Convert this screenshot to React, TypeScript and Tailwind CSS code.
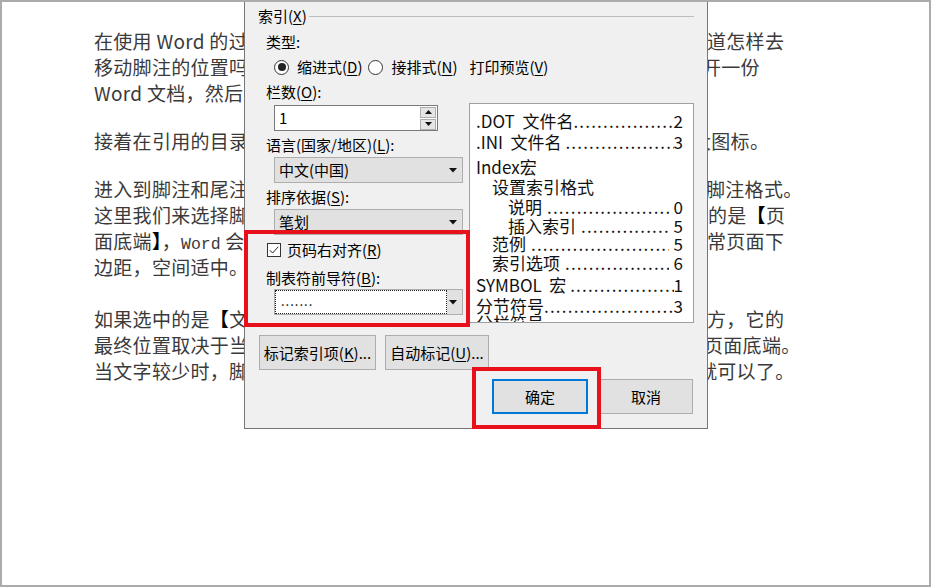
import React from "react";

const DOTS = ".".repeat(80);

function U({ c }: { c: string }) {
  return <span className="underline decoration-1 underline-offset-[2px]">{c}</span>;
}

function Caret() {
  return (
    <svg width="8" height="5" viewBox="0 0 8 5" className="shrink-0">
      <path d="M0 0H8L4 4.5Z" fill="#111" />
    </svg>
  );
}

function Select({ text }: { text: string }) {
  return (
    <div className="ml-[8px] mt-[2px] flex h-[26px] w-[189px] items-center justify-between border border-[#adadad] bg-[#e1e1e1] pl-[4px] pr-[5px]">
      <span>{text}</span>
      <Caret />
    </div>
  );
}

function Radio({ checked }: { checked?: boolean }) {
  return (
    <span className="flex h-[15px] w-[15px] shrink-0 items-center justify-center rounded-full border border-[#333] bg-white">
      {checked && <span className="h-[8px] w-[8px] rounded-full bg-[#222]" />}
    </span>
  );
}

function Row({
  name,
  num,
  cls,
  gap,
}: {
  name: React.ReactNode;
  num: string;
  cls: string;
  gap?: boolean;
}) {
  return (
    <div className={"flex h-[20px] whitespace-nowrap " + cls}>
      <span className="shrink-0">{name}</span>
      <span className={"min-w-0 flex-1 overflow-hidden tracking-[1.2px] " + (gap ? "mx-[5px]" : "")}>{DOTS}</span>
      <span className="shrink-0">{num}</span>
    </div>
  );
}

function Dialog() {
  return (
    <div className="absolute left-[242px] top-0 h-[427px] w-[464px] border-x border-b border-[#767676] bg-[#f0f0f0] text-[15px] leading-[20px] text-black">
      <div className="flex items-center pl-[13px] pr-[13px] pt-[4px]">
        <span>
          索引(<U c="X" />)
        </span>
        <span className="ml-[2px] h-px flex-1 bg-[#bdbdbd]" />
      </div>
      <div className="mt-[6px] pl-[21px]">类型:</div>
      <div className="mt-[5px] flex h-[20px] items-center pl-[29px]">
        <Radio checked />
        <span className="ml-[8px]">
          缩进式(<U c="D" />)
        </span>
        <span className="ml-[6px]">
          <Radio />
        </span>
        <span className="ml-[8px]">
          接排式(<U c="N" />)
        </span>
        <span className="ml-[12px]">
          打印预览(<U c="V" />)
        </span>
      </div>

      <div className="mt-[5px] flex items-start">
        <div className="w-[218px] shrink-0 pl-[21px]">
          <div className="h-[20px]">
            栏数(<U c="O" />):
          </div>
          <div className="ml-[8px] mt-[3px] flex h-[26px] w-[164px] items-center justify-between border border-[#7a7a7a] bg-white pl-[4px] pr-[1px]">
            <span>1</span>
            <div className="flex flex-col gap-[1px]">
              <div className="flex h-[11px] w-[16px] items-center justify-center border border-[#adadad] bg-[#e5e5e5]">
                <svg width="7" height="4" viewBox="0 0 7 4">
                  <path d="M0 4H7L3.5 0Z" fill="#111" />
                </svg>
              </div>
              <div className="flex h-[11px] w-[16px] items-center justify-center border border-[#adadad] bg-[#e5e5e5]">
                <svg width="7" height="4" viewBox="0 0 7 4">
                  <path d="M0 0H7L3.5 4Z" fill="#111" />
                </svg>
              </div>
            </div>
          </div>
          <div className="mt-[4px] h-[20px]">
            语言(国家/地区)(<U c="L" />):
          </div>
          <Select text="中文(中国)" />
          <div className="mt-[4px] h-[20px]">
            排序依据(<U c="S" />):
          </div>
          <Select text="笔划" />
          <div className="mt-[5px] flex h-[20px] items-center">
            <span className="ml-[1px] flex h-[14px] w-[14px] items-center justify-center border border-[#333] bg-white">
              <svg width="12" height="12" viewBox="0 0 12 12">
                <path d="M1.8 6.2L4.6 9L10.2 2.8" stroke="#222" strokeWidth="1" fill="none" />
              </svg>
            </span>
            <span className="ml-[6px]">
              页码右对齐(<U c="R" />)
            </span>
          </div>
          <div className="mt-[8px] h-[20px]">
            制表符前导符(<U c="B" />):
          </div>
          <div className="ml-[8px] mt-[1px] flex h-[26px] w-[189px] items-center border border-[#adadad] bg-[#e1e1e1] pr-[5px]">
            <div className="flex h-[24px] w-[172px] items-center border border-dotted border-[#222] bg-white pb-[3px] pl-[5px] text-[13px] leading-[14px] tracking-[1px]">
              .......
            </div>
            <div className="flex flex-1 justify-end">
              <Caret />
            </div>
          </div>
        </div>

        <div className="ml-[6px] mt-[21px] h-[220px] w-[225px] shrink-0 overflow-hidden border border-[#a0a0a0] bg-white pl-[6px] pr-[10px] pt-[7px] text-[17px] leading-[20px] text-[#111]">
          <Row cls="" name={<span className="whitespace-pre">{".DOT  文件名"}</span>} num="2" />
          <Row cls="mt-[1px]" name={<span className="whitespace-pre">{".INI  文件名 "}</span>} num="3" />
          <div className="mt-[5px] h-[20px]">Index宏</div>
          <div className="ml-[16px] h-[20px]">设置索引格式</div>
          <Row cls="ml-[32px]" name="说明" num="0" gap />
          <Row cls="ml-[32px] -mt-[1px]" name="插入索引" num="5" gap />
          <Row cls="ml-[16px] -mt-[2px]" name="范例" num="5" gap />
          <Row cls="ml-[16px] -mt-[1px]" name="索引选项" num="6" gap />
          <Row cls="mt-[2px]" name={<span className="whitespace-pre">{"SYMBOL  宏 "}</span>} num="1" />
          <Row cls="mt-[1px]" name="分节符号 " num="3" />
          <div className="-mt-[3px] h-[20px]">分栏符号</div>
        </div>
      </div>

      <div className="mt-[12px] flex pl-[14px]">
        <div className="flex h-[35px] w-[117px] items-center justify-center border border-[#adadad] bg-[#e1e1e1]">
          标记索引项(<U c="K" />)...
        </div>
        <div className="ml-[9px] flex h-[35px] w-[104px] items-center justify-center border border-[#adadad] bg-[#e1e1e1]">
          自动标记(<U c="U" />)...
        </div>
      </div>

      <div className="mt-[9px] flex justify-end pr-[14px]">
        <div className="flex h-[35px] w-[96px] items-center justify-center border-2 border-[#0078d7] bg-[#e1e1e1]">
          确定
        </div>
        <div className="ml-[11px] flex h-[35px] w-[94px] items-center justify-center border border-[#adadad] bg-[#e1e1e1]">
          取消
        </div>
      </div>

      <div className="pointer-events-none absolute left-[-1px] top-[228px] h-[97px] w-[226px] border-[4px] border-[#e8101a]" />
      <div className="pointer-events-none absolute left-[227px] top-[365px] h-[62px] w-[129px] border-[4px] border-[#e8101a]" />
    </div>
  );
}

function Line({
  lw,
  left,
  right,
}: {
  lw?: string;
  left: React.ReactNode;
  right?: React.ReactNode;
}) {
  return (
    <div className="flex h-[26px] whitespace-nowrap">
      <span className={"shrink-0 overflow-hidden " + (lw ?? "")}>{left}</span>
      {right && <span>{right}</span>}
    </div>
  );
}

const W1 = "font-['Noto_Sans_CJK_SC',sans-serif]";
const W2 = "font-['Liberation_Mono',monospace] text-[16.5px] tracking-normal";
const B = "font-bold text-black";

function Doc() {
  return (
    <div className="pl-[92px] pt-[26px] text-[19px] font-normal leading-[26px] tracking-[0.3px] text-[#3a3a3a]">
      <div className="mb-[22px]">
        <Line
          lw="w-[613px]"
          left={
            <>
              在使用 <span className={W1}>Word</span> 的过程中，你是否知
            </>
          }
          right="道怎样去"
        />
        <Line lw="w-[608px]" left="移动脚注的位置吗？首先我们需要打开" right="开一份" />
        <Line
          left={
            <>
              <span className={W1}>Word</span> 文档，然后点击【引用】选项卡。
            </>
          }
        />
      </div>
      <div className="mb-[22px]">
        <Line lw="w-[598px]" left="接着在引用的目录中，点击脚注右下角的" right="大图标。" />
      </div>
      <div className="mb-[26px]">
        <Line lw="w-[612px]" left="进入到脚注和尾注对话框后，可以设置" right="脚注格式。" />
        <Line
          lw="w-[614px]"
          left="这里我们来选择脚注的位置，如果选中"
          right={
            <>
              的是<span className={B}>【</span>页
            </>
          }
        />
        <Line
          lw="w-[613px]"
          left={
            <>
              面底端<span className={B}>】</span>，<span className={W2}>Word</span> 会将脚注放置在通
            </>
          }
          right="常页面下"
        />
        <Line left="边距，空间适中。" />
      </div>
      <div>
        <Line
          lw="w-[613px]"
          left={
            <>
              如果选中的是<span className={B}>【</span>文字下方】时，脚注在文字下
            </>
          }
          right="方，它的"
        />
        <Line lw="w-[610px]" left="最终位置取决于当前页的文字数量和页" right="页面底端。" />
        <Line lw="w-[604px]" left="当文字较少时，脚注会紧跟文字，这样" right="就可以了。" />
      </div>
    </div>
  );
}

export default function App() {
  return (
    <div className="relative h-[587px] w-[931px] overflow-hidden border-2 border-[#ababab] bg-white font-['Noto_Sans_CJK_SC',sans-serif]">
      <Doc />
      <Dialog />
    </div>
  );
}
